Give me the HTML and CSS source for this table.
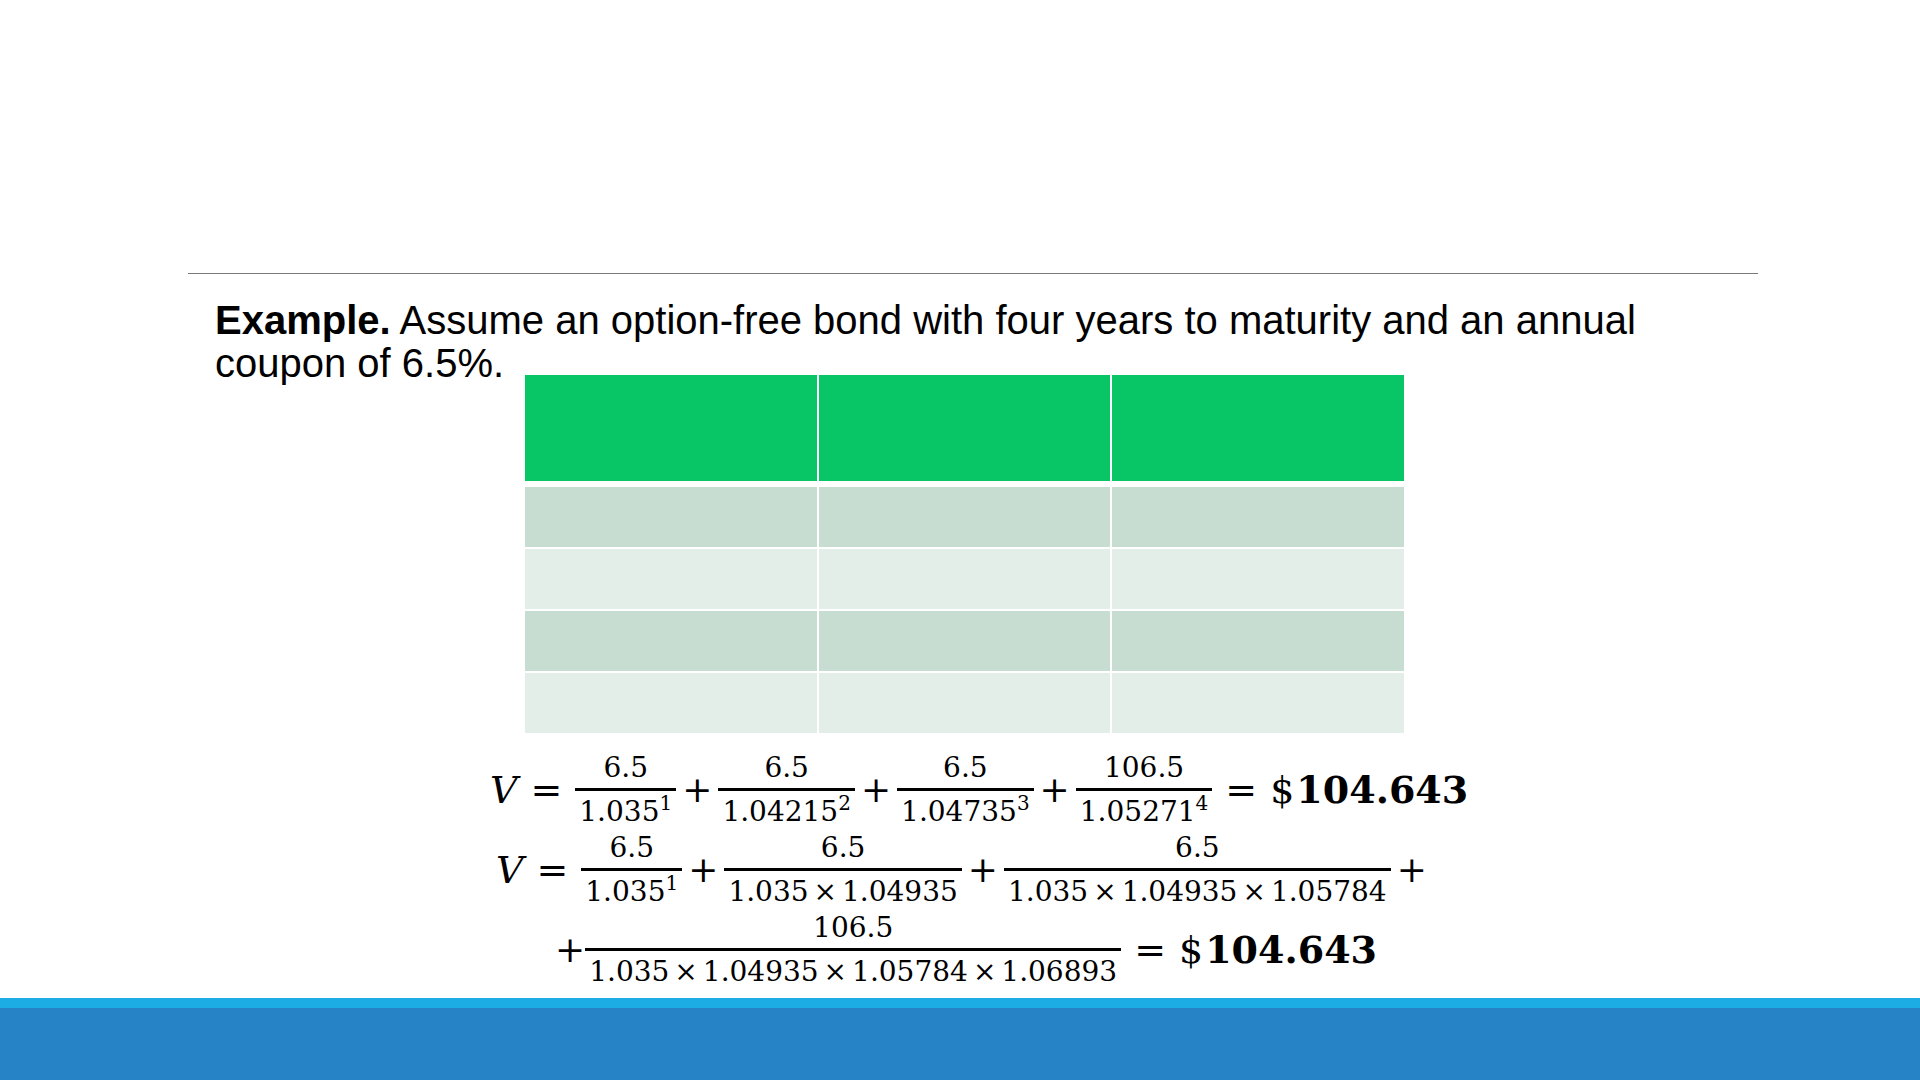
FILE: index.html
```html
<!DOCTYPE html>
<html lang="en">
<head>
<meta charset="utf-8">
<title>Option-free bond example</title>
<link rel="stylesheet" href="styles.css">
</head>
<body>
<div class="slide">
  <div class="title-area"></div>
  <div class="rule"></div>
  <p class="intro"><b>Example.</b> Assume an option-free bond with four years to maturity and an annual coupon of 6.5%.</p>
  <div class="rate-table">
    <div class="cell head"></div><div class="cell head"></div><div class="cell head"></div>
    <div class="cell dark"></div><div class="cell dark"></div><div class="cell dark"></div>
    <div class="cell light"></div><div class="cell light"></div><div class="cell light"></div>
    <div class="cell dark"></div><div class="cell dark"></div><div class="cell dark"></div>
    <div class="cell light"></div><div class="cell light"></div><div class="cell light"></div>
  </div>
  <div class="formula">
    <div class="eq-line line1">
      <span class="var">V</span><span class="rel">=</span>
      <span class="frac"><span class="num">6.5</span><span class="den">1.035<sup>1</sup></span></span>
      <span class="op">+</span>
      <span class="frac"><span class="num">6.5</span><span class="den">1.04215<sup>2</sup></span></span>
      <span class="op">+</span>
      <span class="frac"><span class="num">6.5</span><span class="den">1.04735<sup>3</sup></span></span>
      <span class="op">+</span>
      <span class="frac"><span class="num">106.5</span><span class="den">1.05271<sup>4</sup></span></span>
      <span class="rel">=</span><span class="result">$<b>104.643</b></span>
    </div>
    <div class="eq-line line2">
      <span class="var">V</span><span class="rel">=</span>
      <span class="frac"><span class="num">6.5</span><span class="den">1.035<sup>1</sup></span></span>
      <span class="op">+</span>
      <span class="frac"><span class="num">6.5</span><span class="den">1.035<span class="times">×</span>1.04935</span></span>
      <span class="op">+</span>
      <span class="frac"><span class="num">6.5</span><span class="den">1.035<span class="times">×</span>1.04935<span class="times">×</span>1.05784</span></span>
      <span class="op">+</span>
    </div>
    <div class="eq-line line3">
      <span class="op lead">+</span>
      <span class="frac"><span class="num">106.5</span><span class="den">1.035<span class="times">×</span>1.04935<span class="times">×</span>1.05784<span class="times">×</span>1.06893</span></span>
      <span class="rel">=</span><span class="result">$<b>104.643</b></span>
    </div>
  </div>
  <div class="footer">
    <div class="footer-accent"></div>
    <div class="footer-main"></div>
  </div>
</div>
</body>
</html>
```

FILE: styles.css
```css
html, body {
  margin: 0;
  padding: 0;
  background: #ffffff;
}

.slide {
  width: 1920px;
  height: 1080px;
  display: flex;
  flex-direction: column;
  overflow: hidden;
  background: #ffffff;
}

.title-area {
  height: 273px;
  flex: none;
}

.rule {
  flex: none;
  margin-left: 188px;
  width: 1570px;
  height: 0;
  border-top: 1px solid #7a7a7a;
}

.intro {
  flex: none;
  margin: 25px 0 0 215px;
  width: 1480px;
  font-family: "Liberation Sans", Arial, sans-serif;
  font-size: 40px;
  line-height: 43px;
  color: #000000;
}

.intro b {
  font-weight: bold;
}

.rate-table {
  flex: none;
  margin: -10px 0 0 525px;
  width: 879px;
  display: grid;
  grid-template-columns: repeat(3, 1fr);
  grid-template-rows: 110px repeat(4, 60px);
  column-gap: 2px;
  row-gap: 2px;
}

.rate-table .head {
  background: #08c565;
  height: 106px;
  align-self: start;
}

.rate-table .dark {
  background: #c8ddd2;
}

.rate-table .light {
  background: #e4eee9;
}

.formula {
  flex: none;
  margin-top: 18px;
  display: flex;
  flex-direction: column;
  row-gap: 2px;
  font-family: "DejaVu Serif", "Liberation Serif", serif;
  color: #000000;
}

.eq-line {
  display: flex;
  align-items: center;
  height: 78px;
}

.line1 { padding-left: 490px; }
.line2 { padding-left: 496px; }
.line3 { padding-left: 555px; }

.var {
  font-size: 38px;
  line-height: 1;
  font-style: italic;
}

.rel {
  font-size: 38px;
  line-height: 1;
  margin: 0 13px;
}

.op {
  font-size: 36px;
  line-height: 1;
  margin: 0 6px;
}

.op.lead {
  margin: 0;
}

.result {
  font-size: 38px;
  line-height: 1;
}

.result b {
  font-weight: bold;
  margin-left: 2px;
}

.frac {
  display: inline-flex;
  flex-direction: column;
  align-items: stretch;
  text-align: center;
  font-size: 28px;
}

.num {
  line-height: 34px;
  padding: 0 4px 3px;
  border-bottom: 3px solid #000000;
}

.den {
  line-height: 34px;
  padding: 4px 4px 0;
  white-space: nowrap;
}

.den sup {
  font-size: 20px;
  line-height: 0;
  vertical-align: 11px;
}

.times {
  margin: 0 5px;
}

.footer {
  margin-top: auto;
  flex: none;
  display: flex;
  flex-direction: column;
}

.footer-accent {
  height: 10px;
  background: #1bade3;
}

.footer-main {
  height: 72px;
  background: #2683c6;
}
```
